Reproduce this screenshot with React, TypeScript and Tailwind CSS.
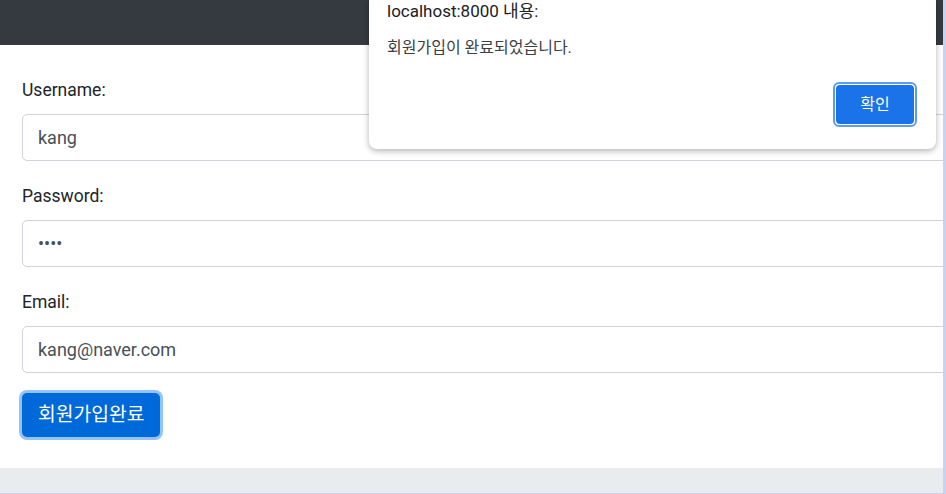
import { useState } from "react";

function Field({
  label,
  type = "text",
  value,
}: {
  label: string;
  type?: string;
  value: string;
}) {
  return (
    <div className="mb-[20px]">
      <label className="block h-[30px] leading-[30px] mb-[9px] text-[17.5px] text-[#212529]">{label}</label>
      <input
        type={type}
        value={value}
        readOnly
        className="block w-[calc(100%+20px)] h-[47px] px-[15px] text-[18px] text-[#495057] bg-white border border-[#ced4da] rounded-[5px] outline-none"
      />
    </div>
  );
}

export default function App() {
  const [open] = useState(true);

  return (
    <div className="relative h-[494px] w-full overflow-hidden bg-white border-r-[3px] border-b border-[#cbd1f3] flex flex-col font-['Roboto','Noto_Sans_CJK_KR',sans-serif]">
      <header className="h-[45px] shrink-0 bg-[#343a40]" />

      <main className="flex-1 overflow-hidden pl-[22px] pt-[30px]">
        <Field label="Username:" value="kang" />
        <Field label="Password:" type="password" value="kang" />
        <Field label="Email:" value="kang@naver.com" />
        <button className="h-[44px] px-[16px] rounded-[5px] bg-[#0069d9] text-white text-[19.3px] shadow-[0_0_0_3px_#93c3fb]">
          회원가입완료
        </button>
      </main>

      <footer className="h-[25px] shrink-0 bg-[#e9ecef]" />

      {open && (
        <div className="absolute left-[369px] top-0 w-[567px] h-[149px] bg-white rounded-b-[8px] shadow-[0_2px_6px_rgba(0,0,0,0.3)] pl-[18px] pr-[19px] flex flex-col">
          <div className="h-[22px] leading-[22px] text-[17px] text-[#202124]">localhost:8000 내용:</div>
          <div className="mt-[16px] h-[20px] leading-[20px] text-[16px] text-[#3c4043]">회원가입이 완료되었습니다.</div>
          <div className="mt-[24px] self-end w-[84px] h-[45px] rounded-[6px] border-2 border-[#5d9cf5] bg-white p-[1px]">
            <button className="w-full h-full rounded-[4px] bg-[#1a73e8] text-white text-[16px]">확인</button>
          </div>
        </div>
      )}
    </div>
  );
}
